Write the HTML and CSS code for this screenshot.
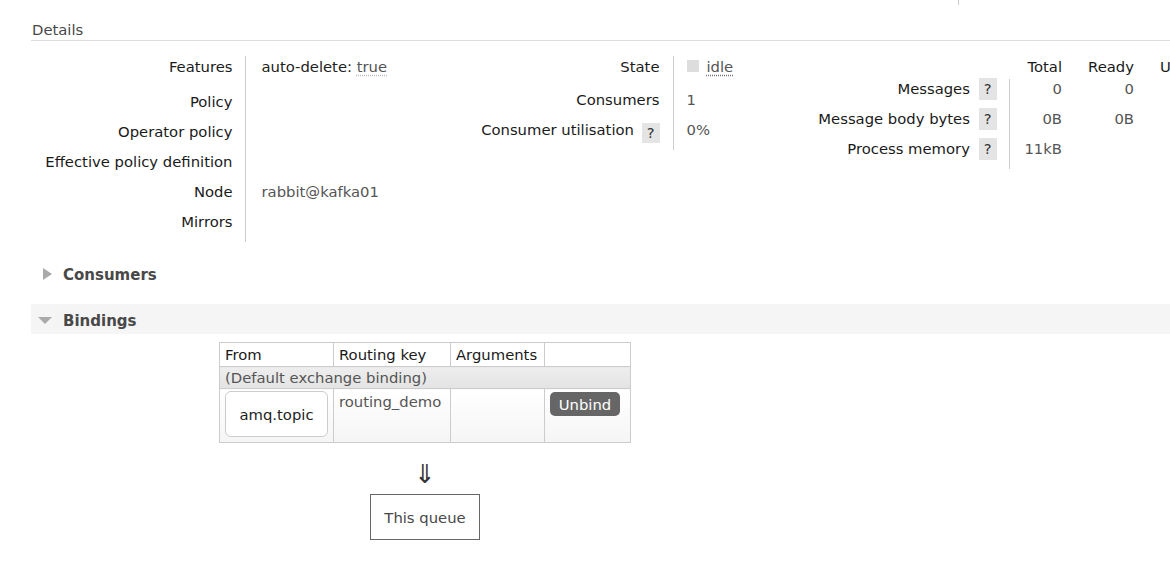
FILE: index.html
```html
<!DOCTYPE html>
<html>
<head>
<meta charset="utf-8">
<title>Queue details</title>
<link rel="stylesheet" href="styles.css">
</head>
<body>
<div class="topstrip"><span class="tick"></span></div>

<div class="section">
  <h2 class="sec-title">Details</h2>
  <div class="details">
    <table class="facts left">
      <tr class="first"><th>Features</th><td><span class="feat">auto-delete: <abbr class="val-abbr">true</abbr></span></td></tr>
      <tr><th>Policy</th><td></td></tr>
      <tr><th>Operator policy</th><td></td></tr>
      <tr><th>Effective policy definition</th><td></td></tr>
      <tr><th>Node</th><td class="val">rabbit@kafka01</td></tr>
      <tr><th>Mirrors</th><td></td></tr>
    </table>

    <table class="facts mid">
      <tr class="first"><th>State</th><td class="val"><span class="state-sq"></span><abbr class="state">idle</abbr></td></tr>
      <tr><th>Consumers</th><td class="val">1</td></tr>
      <tr><th>Consumer utilisation <span class="help">?</span></th><td class="val">0%</td></tr>
    </table>

    <table class="facts right">
      <tr class="head">
        <th class="label"></th>
        <th class="c-total">Total</th>
        <th class="c-ready">Ready</th>
        <th class="c-more">U</th>
      </tr>
      <tr>
        <th class="label">Messages <span class="help">?</span></th>
        <td class="c-total first-col">0</td>
        <td class="c-ready">0</td>
        <td class="c-more"></td>
      </tr>
      <tr>
        <th class="label">Message body bytes <span class="help">?</span></th>
        <td class="c-total first-col">0B</td>
        <td class="c-ready">0B</td>
        <td class="c-more"></td>
      </tr>
      <tr>
        <th class="label">Process memory <span class="help">?</span></th>
        <td class="c-total first-col">11kB</td>
        <td class="c-ready"></td>
        <td class="c-more"></td>
      </tr>
    </table>
  </div>
</div>

<div class="hider">
  <h2 class="toggle"><span class="tri-box"><span class="tri tri-right"></span></span>Consumers</h2>
</div>

<div class="hider">
  <h2 class="toggle open"><span class="tri-box"><span class="tri tri-down"></span></span>Bindings</h2>
  <div class="bindings">
    <table class="list">
      <colgroup>
        <col class="w-from">
        <col class="w-key">
        <col class="w-args">
        <col class="w-act">
      </colgroup>
      <tr class="list-head">
        <th>From</th>
        <th>Routing key</th>
        <th>Arguments</th>
        <th></th>
      </tr>
      <tr class="default-row">
        <td colspan="4">(Default exchange binding)</td>
      </tr>
      <tr class="bind-row">
        <td><span class="exchange">amq.topic</span></td>
        <td class="val">routing_demo</td>
        <td></td>
        <td><button class="unbind" type="button">Unbind</button></td>
      </tr>
    </table>
    <div class="arrow">⇓</div>
    <span class="thisq">This queue</span>
  </div>
</div>
</body>
</html>
```

FILE: styles.css
```css
html, body {
  overflow: hidden;
}

body {
  margin: 0;
  font-family: "DejaVu Sans", Verdana, sans-serif;
  font-size: 14.8px;
  line-height: 20px;
  color: #222;
  background: #fff;
}

.topstrip {
  height: 5px;
}

.tick {
  display: block;
  margin-left: 958px;
  width: 1px;
  height: 5px;
  background: #ccc;
}

.sec-title {
  margin: 15px 0 0 31px;
  padding: 0 0 0 1px;
  height: 20px;
  font-size: 14.8px;
  font-weight: normal;
  line-height: 20px;
  color: #484848;
  border-bottom: 1px solid #ddd;
}

.details {
  display: flex;
  align-items: flex-start;
  margin-top: 15px;
}

.facts {
  border-collapse: collapse;
  flex-shrink: 0;
}

.facts th,
.facts td {
  padding: 0 0 10px 0;
  vertical-align: top;
  line-height: 21px;
  font-weight: normal;
  box-sizing: border-box;
  white-space: nowrap;
}

.facts tr:not(.first):not(.head) th,
.facts tr:not(.first):not(.head) td {
  line-height: 20px;
}

.facts th {
  color: #1a1a1a;
}

.val {
  color: #555;
}

/* left table */
.left {
  margin-left: 31px;
}

.left th {
  width: 214px;
  padding-right: 12px;
  text-align: right;
}

.left td {
  width: 170px;
  border-left: 1px solid #ccc;
  padding-left: 16px;
}

.left tr.first th,
.left tr.first td {
  padding-bottom: 15px;
}

.feat {
  color: #222;
}

.val-abbr {
  color: #555;
  text-decoration: underline dotted #bbb;
  text-underline-offset: 3px;
}

/* middle table */
.mid th {
  width: 258px;
  padding-right: 13px;
  text-align: right;
}

.mid td {
  width: 100px;
  border-left: 1px solid #ccc;
  padding-left: 13px;
}

.mid tr.first th,
.mid tr.first td {
  padding-bottom: 13px;
}

.state-sq {
  display: inline-block;
  width: 12px;
  height: 12px;
  background: #ddd;
  margin-right: 8px;
  vertical-align: 0;
}

.state {
  color: #555;
  text-decoration: underline dotted #777;
  text-underline-offset: 3px;
}

.help {
  display: inline-block;
  background: #e4e4e4;
  color: #333;
  padding: 0 5px;
  margin-left: 3px;
  line-height: 20px;
  margin-top: 3px;
  margin-bottom: -3px;
  vertical-align: top;
}

/* right table */
.right th.label {
  width: 236px;
  padding-right: 12px;
  text-align: right;
}

.right .help {
  line-height: 22px;
  margin-top: -1px;
  margin-bottom: -1px;
  margin-left: 4px;
}

.right tr.head th {
  padding-bottom: 2px;
}

.right .c-total {
  width: 53px;
  text-align: right;
}

.right .c-ready {
  width: 72px;
  text-align: right;
}

.right .c-more {
  padding-left: 26px;
  text-align: left;
}

.right td {
  color: #555;
}

.right td.first-col {
  border-left: 1px solid #ccc;
}

/* collapsible sections */
.toggle {
  display: flex;
  align-items: center;
  box-sizing: border-box;
  margin: 17px 0 0 31px;
  padding: 2px 0 0 7px;
  height: 30px;
  font-size: 15px;
  font-weight: bold;
  color: #484848;
}

.toggle.open {
  margin-top: 15px;
  padding-top: 3px;
  background: #f5f5f5;
}

.tri-box {
  display: flex;
  align-items: center;
  width: 14px;
  height: 14px;
  margin-right: 11px;
}

.tri {
  display: block;
  width: 0;
  height: 0;
}

.tri-right {
  margin-left: 5px;
  margin-top: -3px;
  border-left: 9px solid #aaa;
  border-top: 6px solid transparent;
  border-bottom: 6px solid transparent;
}

.tri-down {
  margin-top: 0;
  border-top: 7px solid #aaa;
  border-left: 7px solid transparent;
  border-right: 7px solid transparent;
}

/* bindings */
.bindings {
  margin: 8px 0 0 219px;
  width: fit-content;
  text-align: center;
}

.list {
  border-collapse: collapse;
  table-layout: fixed;
  text-align: left;
}

.w-from { width: 114px; }
.w-key { width: 117px; }
.w-args { width: 94px; }
.w-act { width: 86px; }

.list th,
.list td {
  border: 1px solid #ccc;
  padding: 2px 5px 1px;
  line-height: 20px;
  vertical-align: top;
  white-space: nowrap;
}

.list th {
  font-weight: normal;
  color: #1a1a1a;
  background: #fff;
}

.default-row td {
  padding: 1px 5px 0;
  color: #555;
  background: linear-gradient(#eee, #e3e3e3);
}

.bind-row td {
  padding: 2px 5px 5px;
  background: linear-gradient(#fff, #f5f5f5);
}

.bind-row td.val {
  padding-top: 3px;
}

.exchange {
  display: block;
  box-sizing: border-box;
  height: 46px;
  line-height: 45px;
  border: 1px solid #ccc;
  border-radius: 6px;
  background: #fff;
  text-align: center;
  color: #222;
}

.unbind {
  display: block;
  width: 70px;
  height: 24px;
  margin-top: 1px;
  padding: 0;
  border: none;
  border-radius: 5px;
  background: #666;
  color: #fff;
  font-family: inherit;
  font-size: 14.8px;
  line-height: 25px;
}

.arrow {
  margin-top: 17px;
  font-size: 26px;
  line-height: 28px;
  color: #333;
}

.thisq {
  display: inline-block;
  margin-top: 6px;
  box-sizing: border-box;
  width: 110px;
  height: 46px;
  line-height: 45px;
  border: 1px solid #666;
  color: #484848;
}
```
